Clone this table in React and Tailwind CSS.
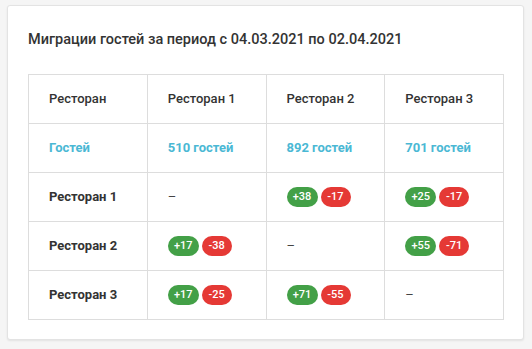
const rows = [
  { name: 'Ресторан 1', cells: [null, [38, 17], [25, 17]] },
  { name: 'Ресторан 2', cells: [[17, 38], null, [55, 71]] },
  { name: 'Ресторан 3', cells: [[17, 25], [71, 55], null] },
];

const Badges = ({ value }) => {
  if (!value) return <span className="text-[#444]">–</span>;
  return (
    <div className="flex items-center gap-[3px]">
      <span className="h-5 w-[31px] rounded-full bg-[#43a047] text-white text-[11px] font-medium flex items-center justify-center">
        +{value[0]}
      </span>
      <span className="h-5 w-[30px] rounded-full bg-[#e53935] text-white text-[11px] font-medium flex items-center justify-center">
        -{value[1]}
      </span>
    </div>
  );
};

const cell = 'border border-[#dddddd] px-5 h-[49px] text-left align-middle';

export default function App() {
  return (
    <div className="min-h-[349px] bg-[#f5f5f5] pt-[5px] pl-[7px] pr-2 pb-2 font-['Roboto',sans-serif]">
      <div className="w-[517px] h-[335px] bg-white border border-[#e3e3e3] rounded-[3px] shadow-[0_1px_2px_rgba(0,0,0,0.08)] px-5 pt-[24px]">
        <h2 className="text-[14.5px] font-medium text-[#333] leading-5">
          Миграции гостей за период с 04.03.2021 по 02.04.2021
        </h2>
        <table className="mt-[24px] w-[476px] border-collapse table-fixed text-[13px]">
          <thead>
            <tr className="text-[#333] font-medium">
              <th className={cell + ' font-medium'}>Ресторан</th>
              <th className={cell + ' font-medium'}>Ресторан 1</th>
              <th className={cell + ' font-medium'}>Ресторан 2</th>
              <th className={cell + ' font-medium'}>Ресторан 3</th>
            </tr>
          </thead>
          <tbody>
            <tr className="text-[#4ab8d4] font-bold">
              <td className={cell}>Гостей</td>
              <td className={cell}>510 гостей</td>
              <td className={cell}>892 гостей</td>
              <td className={cell}>701 гостей</td>
            </tr>
            {rows.map((row) => (
              <tr key={row.name}>
                <td className={cell + ' font-bold text-[#333]'}>{row.name}</td>
                {row.cells.map((c, i) => (
                  <td key={i} className={cell}>
                    <Badges value={c} />
                  </td>
                ))}
              </tr>
            ))}
          </tbody>
        </table>
      </div>
    </div>
  );
}
